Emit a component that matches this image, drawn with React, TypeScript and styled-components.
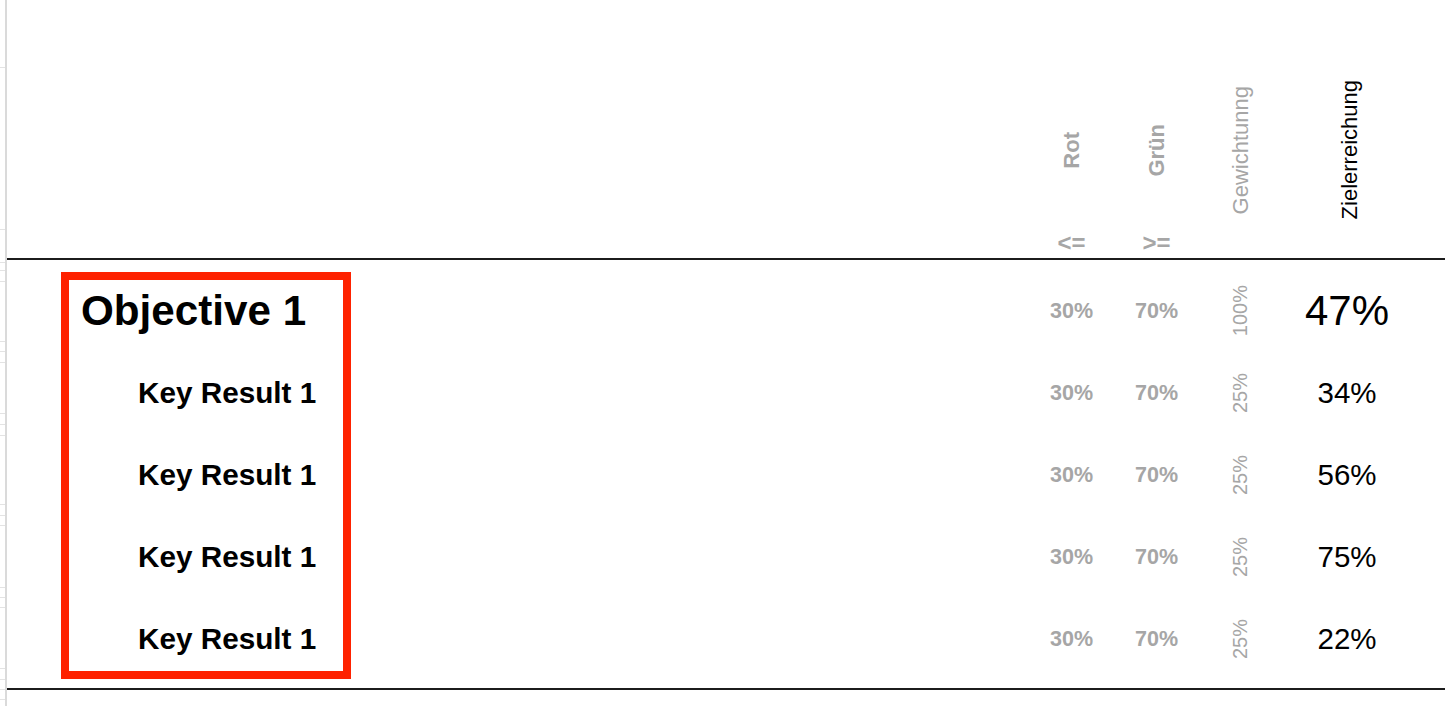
import React from 'react';
import styled, { createGlobalStyle } from 'styled-components';

const GlobalStyle = createGlobalStyle`
  html, body { margin: 0; padding: 0; background: #ffffff; }
  body {
    font-family: "Liberation Sans", Arial, sans-serif;
    overflow: hidden;
  }
`;

const COLS = '1fr 85px 85px 83px 130px';
const MUTED = '#a6a6a6';

const Page = styled.div`
  display: flex;
  width: 1445px;
  height: 706px;
  background: #ffffff;
`;

const Gutter = styled.svg`
  flex: 0 0 7px;
  display: block;
`;

const Sheet = styled.div`
  flex: 1;
  display: flex;
  flex-direction: column;
`;

const HeaderGrid = styled.div`
  display: grid;
  grid-template-columns: ${COLS};
  padding-right: 33px;
  height: 258px;
`;

const HeaderCell = styled.div<{ $col: number; $shift?: number }>`
  grid-column: ${(p) => p.$col};
  display: grid;
  grid-template-rows: 42px 216px;
  justify-items: center;
  padding-left: ${(p) => p.$shift ?? 0}px;
`;

const VerticalLabel = styled.span<{ $bold?: boolean; $dark?: boolean }>`
  grid-row: 2;
  grid-column: 1;
  align-self: center;
  writing-mode: vertical-rl;
  transform: rotate(180deg);
  white-space: nowrap;
  font-size: 22px;
  line-height: 1.15;
  font-weight: ${(p) => (p.$bold ? 700 : 400)};
  color: ${(p) => (p.$dark ? '#000000' : MUTED)};
`;

const Operator = styled.span`
  grid-row: 2;
  grid-column: 1;
  align-self: end;
  margin-bottom: 3px;
  font-size: 24px;
  line-height: 1;
  font-weight: 700;
  color: ${MUTED};
`;

const Rule = styled.div`
  height: 2px;
  background: #1c1c1c;
`;

const Body = styled.div`
  display: grid;
  grid-template-columns: ${COLS};
  grid-template-rows: repeat(5, 82px);
  padding: 10px 33px 8px 0;
`;

const HighlightBox = styled.div`
  grid-column: 1;
  grid-row: 1 / span 5;
  justify-self: start;
  box-sizing: border-box;
  width: 290px;
  margin: 2px 0 1px 54px;
  border: 8px solid #fe2200;
`;

const Label = styled.div<{ $row: number; $objective?: boolean }>`
  grid-column: 1;
  grid-row: ${(p) => p.$row};
  align-self: center;
  justify-self: start;
  padding-left: ${(p) => (p.$objective ? 74 : 131)}px;
  font-size: ${(p) => (p.$objective ? 42.2 : 29.7)}px;
  font-weight: 700;
  color: #000000;
  white-space: nowrap;
`;

const Threshold = styled.div<{ $row: number; $col: number }>`
  grid-column: ${(p) => p.$col};
  grid-row: ${(p) => p.$row};
  align-self: center;
  justify-self: center;
  font-size: 21.5px;
  font-weight: 700;
  color: ${MUTED};
`;

const Weight = styled.div<{ $row: number }>`
  grid-column: 4;
  grid-row: ${(p) => p.$row};
  align-self: center;
  justify-self: center;
  writing-mode: vertical-rl;
  transform: rotate(180deg);
  font-size: 20px;
  line-height: 1.15;
  color: ${MUTED};
`;

const Result = styled.div<{ $row: number; $objective?: boolean }>`
  grid-column: 5;
  grid-row: ${(p) => p.$row};
  align-self: center;
  justify-self: center;
  font-size: ${(p) => (p.$objective ? 42 : 29.5)}px;
  color: #000000;
`;

type Line = {
  label: string;
  objective?: boolean;
  red: string;
  green: string;
  weight: string;
  result: string;
};

const lines: Line[] = [
  { label: 'Objective 1', objective: true, red: '30%', green: '70%', weight: '100%', result: '47%' },
  { label: 'Key Result 1', red: '30%', green: '70%', weight: '25%', result: '34%' },
  { label: 'Key Result 1', red: '30%', green: '70%', weight: '25%', result: '56%' },
  { label: 'Key Result 1', red: '30%', green: '70%', weight: '25%', result: '75%' },
  { label: 'Key Result 1', red: '30%', green: '70%', weight: '25%', result: '22%' },
];

const ticks = [67, 229, 262, 270, 281, 341, 351, 362, 413, 424, 435, 504, 515, 525, 587, 597, 607, 668, 679, 689, 699];

const RowGutter = () => (
  <Gutter width={7} height={706} viewBox="0 0 7 706">
    <rect x={5} y={0} width={2} height={706} fill="#dadada" />
    {ticks.map((y) => (
      <rect key={y} x={0} y={y} width={5} height={1} fill="#e3e3e3" />
    ))}
  </Gutter>
);

export default function App() {
  return (
    <>
      <GlobalStyle />
      <Page>
        <RowGutter />
        <Sheet>
          <HeaderGrid>
            <HeaderCell $col={2}>
              <VerticalLabel $bold>Rot</VerticalLabel>
              <Operator>&lt;=</Operator>
            </HeaderCell>
            <HeaderCell $col={3}>
              <VerticalLabel $bold>Grün</VerticalLabel>
              <Operator>&gt;=</Operator>
            </HeaderCell>
            <HeaderCell $col={4}>
              <VerticalLabel>Gewichtunng</VerticalLabel>
            </HeaderCell>
            <HeaderCell $col={5} $shift={6}>
              <VerticalLabel $dark>Zielerreichung</VerticalLabel>
            </HeaderCell>
          </HeaderGrid>
          <Rule />
          <Body>
            <HighlightBox />
            {lines.map((l, i) => (
              <React.Fragment key={i}>
                <Label $row={i + 1} $objective={l.objective}>{l.label}</Label>
                <Threshold $row={i + 1} $col={2}>{l.red}</Threshold>
                <Threshold $row={i + 1} $col={3}>{l.green}</Threshold>
                <Weight $row={i + 1}>{l.weight}</Weight>
                <Result $row={i + 1} $objective={l.objective}>{l.result}</Result>
              </React.Fragment>
            ))}
          </Body>
          <Rule />
        </Sheet>
      </Page>
    </>
  );
}
